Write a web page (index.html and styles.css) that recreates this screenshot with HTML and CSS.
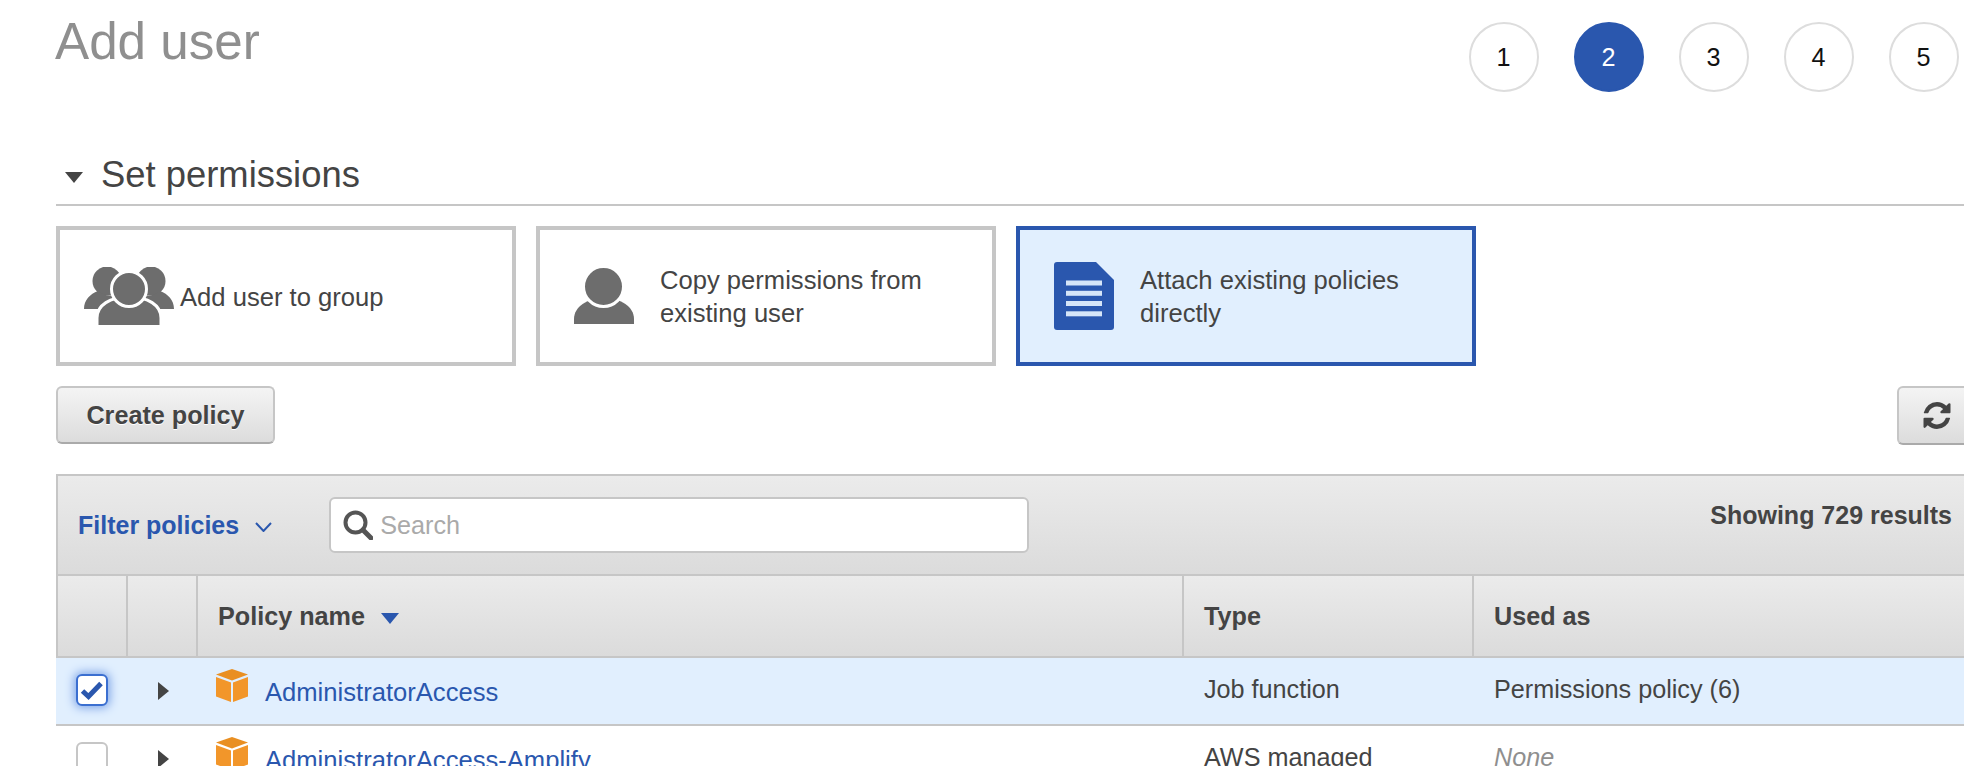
FILE: index.html
```html
<!DOCTYPE html>
<html lang="en">
<head>
    <meta charset="UTF-8" />
    <title>Add user</title>
    <link rel="stylesheet" href="styles.css">
</head>
<body>
    <div class="page">
        <div class="page-head">
            <h1>Add user</h1>
            <ol class="steps">
                <li>1</li>
                <li class="current">2</li>
                <li>3</li>
                <li>4</li>
                <li>5</li>
            </ol>
        </div>

        <h2 class="section-title"><span class="caret-down"></span>Set permissions</h2>

        <div class="choices">
            <div class="choice">
                <span class="choice-icon icon-group">
                    <svg width="90" height="58" viewBox="0 0 90 58">
                        <g fill="#6d6d6d">
                            <circle cx="23" cy="14" r="14.5" />
                            <circle cx="67" cy="14" r="14.5" />
                            <path d="M0 42c0-9 6-15 14-18 6 5 14 6 20 2l8 16z" />
                            <path d="M90 42c0-9-6-15-14-18-6 5-14 6-20 2l-8 16z" />
                        </g>
                        <g fill="#6d6d6d" stroke="#fff" stroke-width="3">
                            <path d="M13 60V51c0-13 13-21 32-21s32 8 32 21v9z" />
                            <circle cx="45" cy="22" r="17.500" />
                        </g>
                    </svg>
                </span>
                <span class="choice-text">Add user to group</span>
            </div>
            <div class="choice">
                <span class="choice-icon">
                    <svg width="60" height="56" viewBox="0 0 60 56">
                        <path fill="#6d6d6d" d="M0 56V51c0-12 13-21 30-21s30 9 30 21v5z" />
                        <circle cx="29.500" cy="18.500" r="20" fill="#6d6d6d" stroke="#fff" stroke-width="3" />
                    </svg>
                </span>
                <span class="choice-text">Copy permissions from existing user</span>
            </div>
            <div class="choice selected">
                <span class="choice-icon">
                    <svg width="60" height="68" viewBox="0 0 60 68">
                        <path fill="#2a57ae" d="M3 0h39l18 18v47a3 3 0 0 1-3 3H3a3 3 0 0 1-3-3V3a3 3 0 0 1 3-3z" />
                        <g fill="#d5e5f8">
                            <rect x="12" y="18.500" width="36" height="5" />
                            <rect x="12" y="28.800" width="36" height="5" />
                            <rect x="12" y="39" width="36" height="5" />
                            <rect x="12" y="49.300" width="36" height="5" />
                        </g>
                    </svg>
                </span>
                <span class="choice-text">Attach existing policies directly</span>
            </div>
        </div>

        <div class="toolbar">
            <button class="btn">Create policy</button>
            <button class="btn btn-refresh">
                <svg width="28" height="27" viewBox="128 128 1536 1536">
                    <path fill="#444" d="M1639 1056q0 5-1 7-64 268-268 434.500t-478 166.500q-146 0-282.500-55t-243.500-157l-129 129q-19 19-45 19t-45-19-19-45v-448q0-26 19-45t45-19h448q26 0 45 19t19 45-19 45l-137 137q71 66 161 102t187 36q134 0 250-65t186-179q11-17 53-117 8-23 30-23h192q13 0 22.500 9.500t9.500 22.500zm25-800v448q0 26-19 45t-45 19h-448q-26 0-45-19t-19-45 19-45l138-138q-148-137-349-137-134 0-250 65t-186 179q-11 17-53 117-8 23-30 23h-199q-13 0-22.500-9.500t-9.500-22.500v-7q65-268 270-434.500t480-166.500q146 0 284 55.500t245 156.500l130-129q19-19 45-19t45 19 19 45z" />
                </svg>
            </button>
        </div>

        <div class="filter-bar">
            <span class="filter-label">Filter policies</span>
            <svg class="chevron" width="17" height="10" viewBox="0 0 17 10">
                <path d="M1 1l7.500 8L16 1" fill="none" stroke="#2a57ae" stroke-width="2" />
            </svg>
            <div class="search">
                <svg width="30" height="30" viewBox="0 0 30 30">
                    <circle cx="12.500" cy="12.500" r="10" fill="none" stroke="#555" stroke-width="4" />
                    <path d="M20 20l8 8" stroke="#555" stroke-width="5" stroke-linecap="round" />
                </svg>
                <span class="placeholder">Search</span>
            </div>
            <span class="result-count">Showing 729 results</span>
        </div>

        <table class="policies">
            <colgroup>
                <col class="col-check" />
                <col class="col-expand" />
                <col class="col-name" />
                <col class="col-type" />
                <col class="col-used" />
            </colgroup>
            <thead>
                <tr>
                    <th class="first"></th>
                    <th></th>
                    <th>Policy name<span class="sort-arrow"></span></th>
                    <th>Type</th>
                    <th class="last">Used as</th>
                </tr>
            </thead>
            <tbody>
                <tr class="row-selected">
                    <td class="cell-check">
                        <span class="checkbox checked">
                            <svg width="28" height="28" viewBox="0 0 28 28">
                                <path d="M4.500 15l6 5.500L23 7.500" fill="none" stroke="#2a57ae" stroke-width="5" />
                            </svg>
                        </span>
                    </td>
                    <td class="cell-expand"><span class="caret-right"></span></td>
                    <td>
                        <div class="name-cell">
                            <svg width="32" height="33" viewBox="0 0 32 33">
                                <path fill="#e98f22" d="M16 0l16 5.500L16 11.500 0 5.500z" />
                                <path fill="#f2962a" d="M0 8l15 5.500V33L0 27.500zM32 8l-15 5.500V33l15-5.500z" />
                            </svg>
                            <a class="policy-link">AdministratorAccess</a>
                        </div>
                    </td>
                    <td class="cell-text">Job function</td>
                    <td class="cell-text">Permissions policy (6)</td>
                </tr>
                <tr>
                    <td class="cell-check"><span class="checkbox"></span></td>
                    <td class="cell-expand"><span class="caret-right"></span></td>
                    <td>
                        <div class="name-cell">
                            <svg width="32" height="33" viewBox="0 0 32 33">
                                <path fill="#e98f22" d="M16 0l16 5.500L16 11.500 0 5.500z" />
                                <path fill="#f2962a" d="M0 8l15 5.500V33L0 27.500zM32 8l-15 5.500V33l15-5.500z" />
                            </svg>
                            <a class="policy-link">AdministratorAccess-Amplify</a>
                        </div>
                    </td>
                    <td class="cell-text">AWS managed</td>
                    <td class="cell-text none">None</td>
                </tr>
            </tbody>
        </table>
    </div>
</body>
</html>
```
FILE: styles.css
```css
html, body {
    margin: 0;
    padding: 0;
    height: 766px;
    overflow: hidden;
    background-color: white;
}
body {
    font-family: "Liberation Sans", Arial, sans-serif;
    font-size: 25.6px;
    line-height: 33px;
    color: #444;
}
.page {
    width: 1920px;
    margin-left: 56px;
}

/* header */
.page-head {
    display: flex;
    justify-content: space-between;
    align-items: flex-start;
    height: 92px;
    padding-right: 17px;
}
h1 {
    margin: 17px 0 0 -1px;
    font-size: 51.2px;
    line-height: 50px;
    font-weight: normal;
    color: #8f8f8f;
}
.steps {
    display: flex;
    gap: 35px;
    list-style: none;
    margin: 22px 0 0;
    padding: 0;
}
.steps li {
    box-sizing: border-box;
    width: 70px;
    height: 70px;
    padding-right: 1px;
    border: 2px solid #ddd;
    border-radius: 50%;
    display: flex;
    align-items: center;
    justify-content: center;
    color: #111;
    font-size: 25.2px;
}
.steps li.current {
    background-color: #2a57ae;
    border-color: #2a57ae;
    color: white;
}

/* section */
.section-title {
    display: flex;
    align-items: center;
    margin: 60px 0 0;
    padding: 1px 0 7px;
    height: 44px;
    border-bottom: 2px solid #c6c6c6;
    font-size: 36.4px;
    line-height: 44px;
    font-weight: normal;
}
.caret-down {
    width: 0;
    height: 0;
    margin: 4px 18px 0 9px;
    border-left: 9px solid transparent;
    border-right: 9px solid transparent;
    border-top: 11px solid #444;
}

/* choice cards */
.choices {
    display: flex;
    gap: 20px;
    margin-top: 20px;
}
.choice {
    box-sizing: border-box;
    width: 460px;
    height: 140px;
    border: 4px solid #c6c6c6;
    display: flex;
    align-items: center;
}
.choice.selected {
    border-color: #2a57ae;
    background-color: #e1effe;
}
.choice-icon {
    box-sizing: border-box;
    flex: none;
    width: 120px;
    padding-left: 34px;
    display: flex;
    align-items: center;
}
.choice-icon.icon-group {
    padding-left: 24px;
}
.choice-text {
    padding-top: 2px;
}

/* buttons */
.toolbar {
    display: flex;
    justify-content: space-between;
    align-items: flex-start;
    margin-top: 20px;
}
.btn {
    box-sizing: border-box;
    height: 58px;
    width: 219px;
    padding: 0;
    border: 2px solid #c6c6c6;
    border-bottom-color: #aaa;
    border-radius: 6px;
    background: linear-gradient(#f4f4f4, #dcdcdc);
    font-family: inherit;
    font-size: 25.2px;
    font-weight: bold;
    color: #444;
    text-shadow: 0 1px 0 white;
}
.btn-refresh {
    width: 79px;
    height: 59px;
    display: flex;
    align-items: center;
    padding-left: 24px;
}

/* filter bar */
.filter-bar {
    box-sizing: border-box;
    height: 102px;
    margin-top: 29px;
    padding: 0 24px 0 20px;
    border-top: 2px solid #c6c6c6;
    border-left: 2px solid #c6c6c6;
    border-bottom: 2px solid #c6c6c6;
    background: linear-gradient(#ebebeb, #dbdbdb);
    font-size: 25px;
    display: flex;
    align-items: center;
}
.filter-label {
    font-weight: bold;
    color: #2a57ae;
}
.chevron {
    margin: 4px 0 0 16px;
}
.search {
    box-sizing: border-box;
    width: 700px;
    height: 56px;
    margin-left: 57px;
    padding-left: 12px;
    border: 2px solid #c6c6c6;
    border-radius: 6px;
    background-color: white;
    font-size: 25.2px;
    display: flex;
    align-items: center;
    gap: 7px;
}
.placeholder {
    color: #aaa;
}
.result-count {
    margin-left: auto;
    align-self: flex-start;
    margin-top: 23px;
    font-weight: bold;
}

/* table */
.policies {
    width: 1920px;
    table-layout: fixed;
    border-collapse: separate;
    border-spacing: 0;
}
.col-check { width: 72px; }
.col-expand { width: 70px; }
.col-name { width: 986px; }
.col-type { width: 290px; }
.policies th {
    box-sizing: border-box;
    height: 82px;
    padding: 0 0 0 20px;
    border-right: 2px solid #c6c6c6;
    border-bottom: 2px solid #c6c6c6;
    background: linear-gradient(#ebebeb, #dbdbdb);
    text-align: left;
    font-size: 25.2px;
    font-weight: bold;
    white-space: nowrap;
}
.policies th.first {
    border-left: 2px solid #c6c6c6;
}
.policies th.last {
    border-right: none;
}
.sort-arrow {
    display: inline-block;
    width: 0;
    height: 0;
    margin: 0 0 1px 16px;
    border-left: 9px solid transparent;
    border-right: 9px solid transparent;
    border-top: 11px solid #2a57ae;
}
.policies td {
    box-sizing: border-box;
    height: 68px;
    padding: 0;
    vertical-align: top;
    border-bottom: 2px solid #c6c6c6;
}
.row-selected td {
    background-color: #e1effe;
}
.policies .cell-check {
    padding: 16px 0 0 20px;
}
.policies .cell-expand {
    padding: 24px 0 0 30px;
}
.policies .cell-text {
    padding: 15px 0 0 20px;
    font-size: 25.2px;
}
.none {
    font-style: italic;
    color: #8f8f8f;
}
.checkbox {
    box-sizing: border-box;
    display: block;
    width: 32px;
    height: 32px;
    border: 2px solid #c6c6c6;
    border-radius: 6px;
    background-color: white;
}
.checkbox.checked {
    border-color: #3b6fd0;
    box-shadow: 0 0 10px 2px #7fa6e8;
}
.checkbox svg {
    display: block;
}
.caret-right {
    display: block;
    width: 0;
    height: 0;
    border-top: 9.500px solid transparent;
    border-bottom: 9.500px solid transparent;
    border-left: 11px solid #444;
}
.name-cell {
    display: flex;
    align-items: flex-start;
    gap: 17px;
    padding: 11px 0 0 18px;
}
.policy-link {
    margin-top: 7px;
    color: #2a57ae;
    white-space: nowrap;
}
```
